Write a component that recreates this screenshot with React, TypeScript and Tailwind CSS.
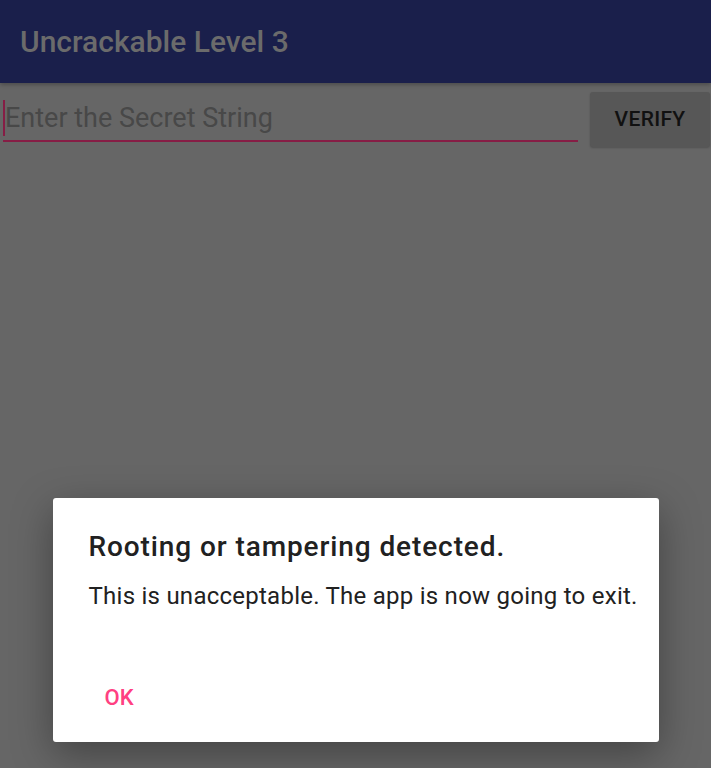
export default function App() {
  return (
    <div className="relative h-[768px] w-full overflow-hidden bg-[#666666] font-['Roboto',sans-serif]">
      {/* App bar */}
      <header className="relative z-10 flex h-[83px] items-center bg-[#1a1f4b] pl-[20px] shadow-[0_2px_4px_rgba(0,0,0,0.25)]">
        <h1 className="text-[30px] font-medium leading-[36px] text-[#6b6b6b]">Uncrackable Level 3</h1>
      </header>

      {/* Input row */}
      <div className="flex items-start pt-[9px] pl-[3px] pr-[1px]">
        <div className="flex-1 pt-[6px]">
          <div className="flex h-[40px] items-center">
            <span className="h-[36px] w-[2px] bg-[#861d45]" />
            <span className="text-[27px] leading-[36px] text-[#484848]">Enter the Secret String</span>
          </div>
          <div className="mt-[2px] h-[2px] w-[575px] bg-[#861d45]" />
        </div>
        <button className="flex h-[55px] w-[120px] items-center justify-center rounded-[3px] bg-[#575757] text-[21px] font-medium tracking-[0.3px] text-[#111111] shadow-[0_1px_2px_rgba(0,0,0,0.2)]">
          VERIFY
        </button>
      </div>

      {/* Dialog */}
      <div className="absolute inset-0 flex justify-center pt-[498px]">
        <div className="h-[244px] w-[606px] rounded-[3px] bg-white shadow-[0_12px_40px_rgba(0,0,0,0.35)]">
          <div className="pl-[36px] pt-[31px]">
            <h2 className="text-[28px] font-medium leading-[36px] tracking-[0.9px] text-[#212121]">
              Rooting or tampering detected.
            </h2>
            <p className="mt-[15px] text-[24px] leading-[32px] tracking-[0.25px] text-[#212121]">
              This is unacceptable. The app is now going to exit.
            </p>
          </div>
          <div className="pl-[52px] pt-[72px]">
            <span className="block text-[22px] font-medium leading-[28px] text-[#ff4081]">OK</span>
          </div>
        </div>
      </div>
    </div>
  );
}
